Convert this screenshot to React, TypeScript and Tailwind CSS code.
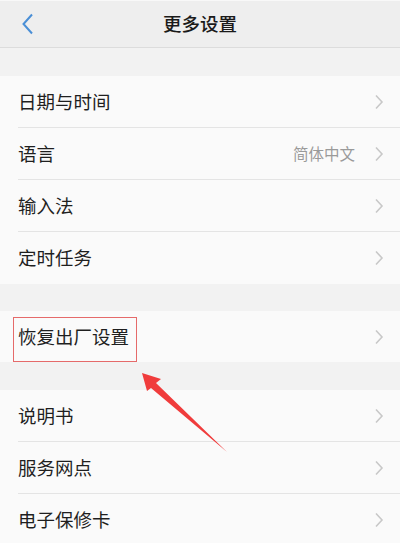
import React from "react";

const font = { fontFamily: '"Noto Sans CJK SC", "Noto Sans", sans-serif' };

function Chevron() {
  return (
    <svg width="10" height="16" viewBox="0 0 10 16" className="shrink-0">
      <path d="M2 1.5 L8 8 L2 14.5" fill="none" stroke="#c8c8c8" strokeWidth="1.6" />
    </svg>
  );
}

function Row({ label, value, last, h = "h-[52px]", children }: { label: string; value?: string; last?: boolean; h?: string; children?: React.ReactNode }) {
  return (
    <div className={`relative pl-[18px] bg-[#fafafa] ${h}`}>
      <div className={`flex items-center h-full pr-[16px] ${last ? "" : "border-b border-[#e4e4e4]"}`}>
        <span className="flex-1 text-[18.5px] text-[#1f1f1f]">{label}</span>
        {value && <span className="text-[15.5px] text-[#9a9a9a] mr-[19px]">{value}</span>}
        <Chevron />
      </div>
      {children}
    </div>
  );
}

export default function App() {
  return (
    <div className="relative w-[400px] h-[543px] overflow-hidden bg-[#f2f2f2]" style={font}>
      {/* header */}
      <div className="relative h-[48px] bg-[#eeeeee] border-t border-[#f8f8f8] border-b border-b-[#dcdcdc] flex items-center justify-center">
        <svg width="14" height="22" viewBox="0 0 14 22" className="absolute left-[21px] top-[12px]">
          <path d="M11 1.5 L2.5 11 L11 20.5" fill="none" stroke="#4a8fd6" strokeWidth="2" />
        </svg>
        <span className="text-[18.5px] font-medium text-[#1a1a1a]">更多设置</span>
      </div>

      <div className="h-[28px]" />
      <Row label="日期与时间" />
      <Row label="语言" value="简体中文" />
      <Row label="输入法" />
      <Row label="定时任务" last />

      <div className="h-[27px]" />
      <Row label="恢复出厂设置" last h="h-[51px]">
        <div className="absolute left-[13px] top-[6px] w-[124px] h-[45px] border border-[#e56a6a]" />
      </Row>

      <div className="h-[28px]" />
      <Row label="说明书" />
      <Row label="服务网点" />
      <Row label="电子保修卡" last />

      {/* annotation arrow */}
      <svg className="absolute left-0 top-0 pointer-events-none" width="400" height="543" viewBox="0 0 400 543">
        <path
          d="M142 373 L161 379 L156 383 L227 452 L151 388 L147 391 Z"
          fill="#f03c3c"
        />
      </svg>
    </div>
  );
}
